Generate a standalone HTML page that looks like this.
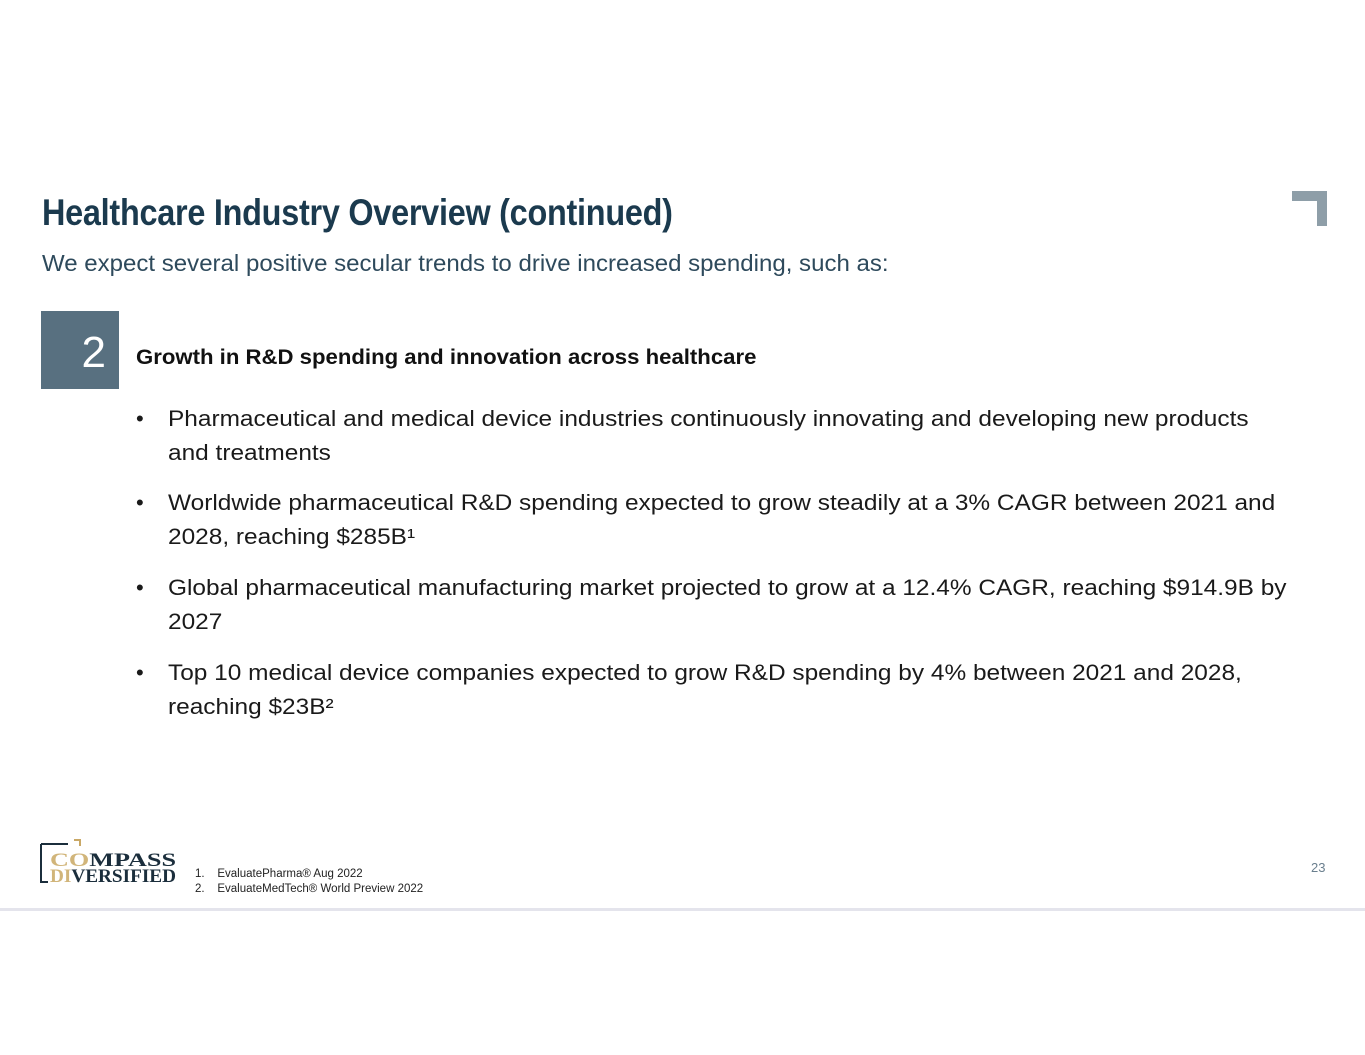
<!DOCTYPE html>
<html><head><meta charset="utf-8"><style>
body{margin:0;width:1365px;height:1055px;background:#fff;position:relative;overflow:hidden;font-family:"Liberation Sans",sans-serif}
.a{position:absolute;white-space:nowrap}
.title{left:42px;top:192px;font-size:37px;font-weight:bold;color:#1b3a4e;transform:scaleX(0.876);transform-origin:left top;letter-spacing:-0.3px}
.sub{left:42px;top:250px;font-size:23px;color:#2e4a5c;transform:scaleX(1.045);transform-origin:left top}
.box{left:41px;top:311px;width:78px;height:78px;background:#587080;color:#fff;font-size:44px;text-align:right;box-sizing:border-box;padding-right:13px;line-height:84px}
.hd{left:136px;top:346px;font-size:21px;font-weight:bold;color:#111;transform:scaleX(1.055);transform-origin:left top}
.b{left:136px;font-size:22px;color:#1a1a1a;line-height:34px}
.b span{position:absolute;left:0}
.b div{margin-left:32px;transform:scaleX(1.11);transform-origin:left top}
.corner{left:1292px;top:191px;width:35px;height:35px;background:#8e9ea8}
.corner:after{content:"";position:absolute;left:0;top:10px;width:25px;height:25px;background:#fff}
.fn{left:195px;font-size:11.5px;color:#222}
</style></head><body>
<div class="a title">Healthcare Industry Overview (continued)</div>
<div class="a sub">We expect several positive secular trends to drive increased spending, such as:</div>
<div class="a corner"></div>
<div class="a box">2</div>
<div class="a hd">Growth in R&amp;D spending and innovation across healthcare</div>
<div class="a b" style="top:402px"><span>•</span><div>Pharmaceutical and medical device industries continuously innovating and developing new products<br>and treatments</div></div>
<div class="a b" style="top:486px"><span>•</span><div>Worldwide pharmaceutical R&amp;D spending expected to grow steadily at a 3% CAGR between 2021 and<br>2028, reaching $285B¹</div></div>
<div class="a b" style="top:571px"><span>•</span><div>Global pharmaceutical manufacturing market projected to grow at a 12.4% CAGR, reaching $914.9B by<br>2027</div></div>
<div class="a b" style="top:656px"><span>•</span><div>Top 10 medical device companies expected to grow R&amp;D spending by 4% between 2021 and 2028,<br>reaching $23B²</div></div>
<svg class="a" style="left:38px;top:838px" width="145" height="48">
<path d="M3 6 V44 H10 M3 6 H30" stroke="#1b2e3c" stroke-width="2" fill="none"/>
<path d="M36 2 H42 V8" stroke="#c9a866" stroke-width="2" fill="none"/>
<text x="12" y="28" font-family="Liberation Serif" font-weight="bold" font-size="19" fill="#d1b57a" textLength="126" lengthAdjust="spacingAndGlyphs">CO<tspan fill="#1b2e3c">MPASS</tspan></text>
<text x="12" y="44" font-family="Liberation Serif" font-weight="bold" font-size="19" fill="#d1b57a" textLength="126" lengthAdjust="spacingAndGlyphs">DI<tspan fill="#1b2e3c">VERSIFIED</tspan></text>
</svg>
<div class="a fn" style="top:868px">1.&nbsp;&nbsp;&nbsp; EvaluatePharma® Aug 2022</div>
<div class="a fn" style="top:883px">2.&nbsp;&nbsp;&nbsp; EvaluateMedTech® World Preview 2022</div>
<div class="a" style="left:1311px;top:860px;font-size:13px;color:#6a7f8e">23</div>
<div class="a" style="left:0;top:908px;width:1365px;height:3px;background:#e4e4ec"></div>
</body></html>
